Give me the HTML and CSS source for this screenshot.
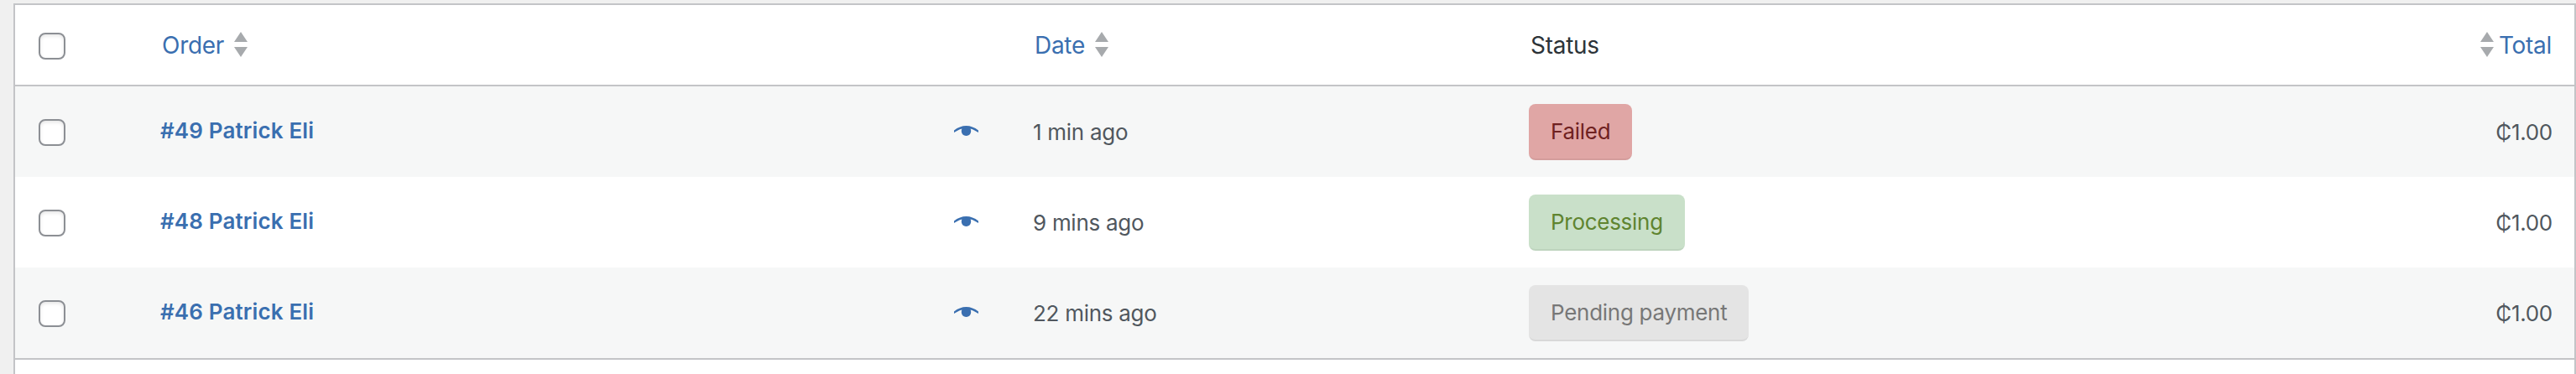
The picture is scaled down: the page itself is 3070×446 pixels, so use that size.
FILE: index.html
```html
<!DOCTYPE html>
<html lang="en">
<head>
<meta charset="utf-8">
<title>Orders</title>
<link rel="stylesheet" href="styles.css">
</head>
<body>
<svg class="defs" width="0" height="0" aria-hidden="true">
  <symbol id="sort" viewBox="0 0 16 30"><path d="M8 0l8 12H0zM0 18h16L8 30z"/></symbol>
  <symbol id="eye" viewBox="0 0 29 13"><path d="M0 5.4C4.500 1.900 9.500 0 14.500 0S24.500 1.900 29 5.400V8C26.200 6.200 23 4.400 19.500 3.500A5.700 5.700 0 1 1 9.500 3.500C6 4.400 2.800 6.200 0 8z"/></symbol>
</svg>
<main class="table">
  <div class="row head">
    <div class="check"><span class="box"></span></div>
    <div class="order"><a>Order</a><svg class="sort"><use href="#sort"/></svg></div>
    <div class="date"><a>Date</a><svg class="sort"><use href="#sort"/></svg></div>
    <div class="status"><span>Status</span></div>
    <div class="total"><svg class="sort"><use href="#sort"/></svg><a>Total</a></div>
  </div>
  <div class="row alt">
    <div class="check"><span class="box"></span></div>
    <div class="order"><a class="name">#49 Patrick Eli</a><svg class="eye"><use href="#eye"/></svg></div>
    <div class="date">1 min ago</div>
    <div class="status"><span class="badge failed">Failed</span></div>
    <div class="total">₵1.00</div>
  </div>
  <div class="row">
    <div class="check"><span class="box"></span></div>
    <div class="order"><a class="name">#48 Patrick Eli</a><svg class="eye"><use href="#eye"/></svg></div>
    <div class="date">9 mins ago</div>
    <div class="status"><span class="badge processing">Processing</span></div>
    <div class="total">₵1.00</div>
  </div>
  <div class="row alt">
    <div class="check"><span class="box"></span></div>
    <div class="order"><a class="name">#46 Patrick Eli</a><svg class="eye"><use href="#eye"/></svg></div>
    <div class="date">22 mins ago</div>
    <div class="status"><span class="badge pending">Pending payment</span></div>
    <div class="total">₵1.00</div>
  </div>
  <div class="foot"></div>
</main>
</body>
</html>
```
FILE: styles.css
```css
* { box-sizing: border-box; }
body {
  margin: 0;
  height: 446px;
  padding: 4px 0 0 16px;
  overflow: hidden;
  background: #f0f0f0;
  font-family: Inter, "Liberation Sans", sans-serif;
  font-size: 26px;
  letter-spacing: -.28px;
  color: #50575e;
}
.defs { position: absolute; }
.table {
  height: 460px;
  background: #fff;
  border: 2px solid #c3c4c7;
}
.row {
  display: grid;
  grid-template-columns: 173px 1040px 591px 1fr 300px;
  height: 108px;
  line-height: 109px;
  white-space: nowrap;
}
.row > div { display: flex; align-items: flex-start; }
.alt { background: #f6f7f7; }
.foot { border-top: 2px solid #c3c4c7; }

.head {
  height: 97px;
  line-height: 96px;
  font-size: 28px;
  color: #2c3338;
  border-bottom: 2px solid #c3c4c7;
}
.head a, .name { color: #3a6fb0; }
.head .order, .head .date, .head .status { padding-left: 2px; }
.sort {
  width: 16px;
  height: 30px;
  margin: 32px 0 0 12px;
  fill: #a7aaad;
}

.check { padding: 39px 0 0 28px; }
.head .check { padding-top: 33px; }
.box {
  width: 32px;
  height: 32px;
  border: 2px solid #8c8f94;
  border-radius: 8px;
  background: #fff;
  box-shadow: inset 0 2px 4px rgba(0, 0, 0, .1);
}

.row .order { justify-content: space-between; padding-right: 65px; }
.row.head .order { justify-content: flex-start; }
.name { line-height: 105px; font-weight: 600; letter-spacing: .14px; }
.eye { width: 29px; height: 13px; margin-top: 47px; fill: #3a6fb0; }

.row .status { padding-top: 21px; }
.row.head .status { padding-top: 0; }
.badge {
  height: 67px;
  padding: 0 26px;
  line-height: 66px;
  border-radius: 8px;
  border-bottom: 2px solid rgba(0, 0, 0, .05);
}
.failed { background: #e0a6a5; color: #6f2121; }
.processing { background: #c9e0c9; color: #5f8430; }
.pending { background: #e4e4e4; color: #777; }

.row .total { justify-content: flex-end; padding-right: 26px; }
.row.head .total { padding-right: 27px; }
.total .sort { margin: 32px 6px 0 0; }
```
